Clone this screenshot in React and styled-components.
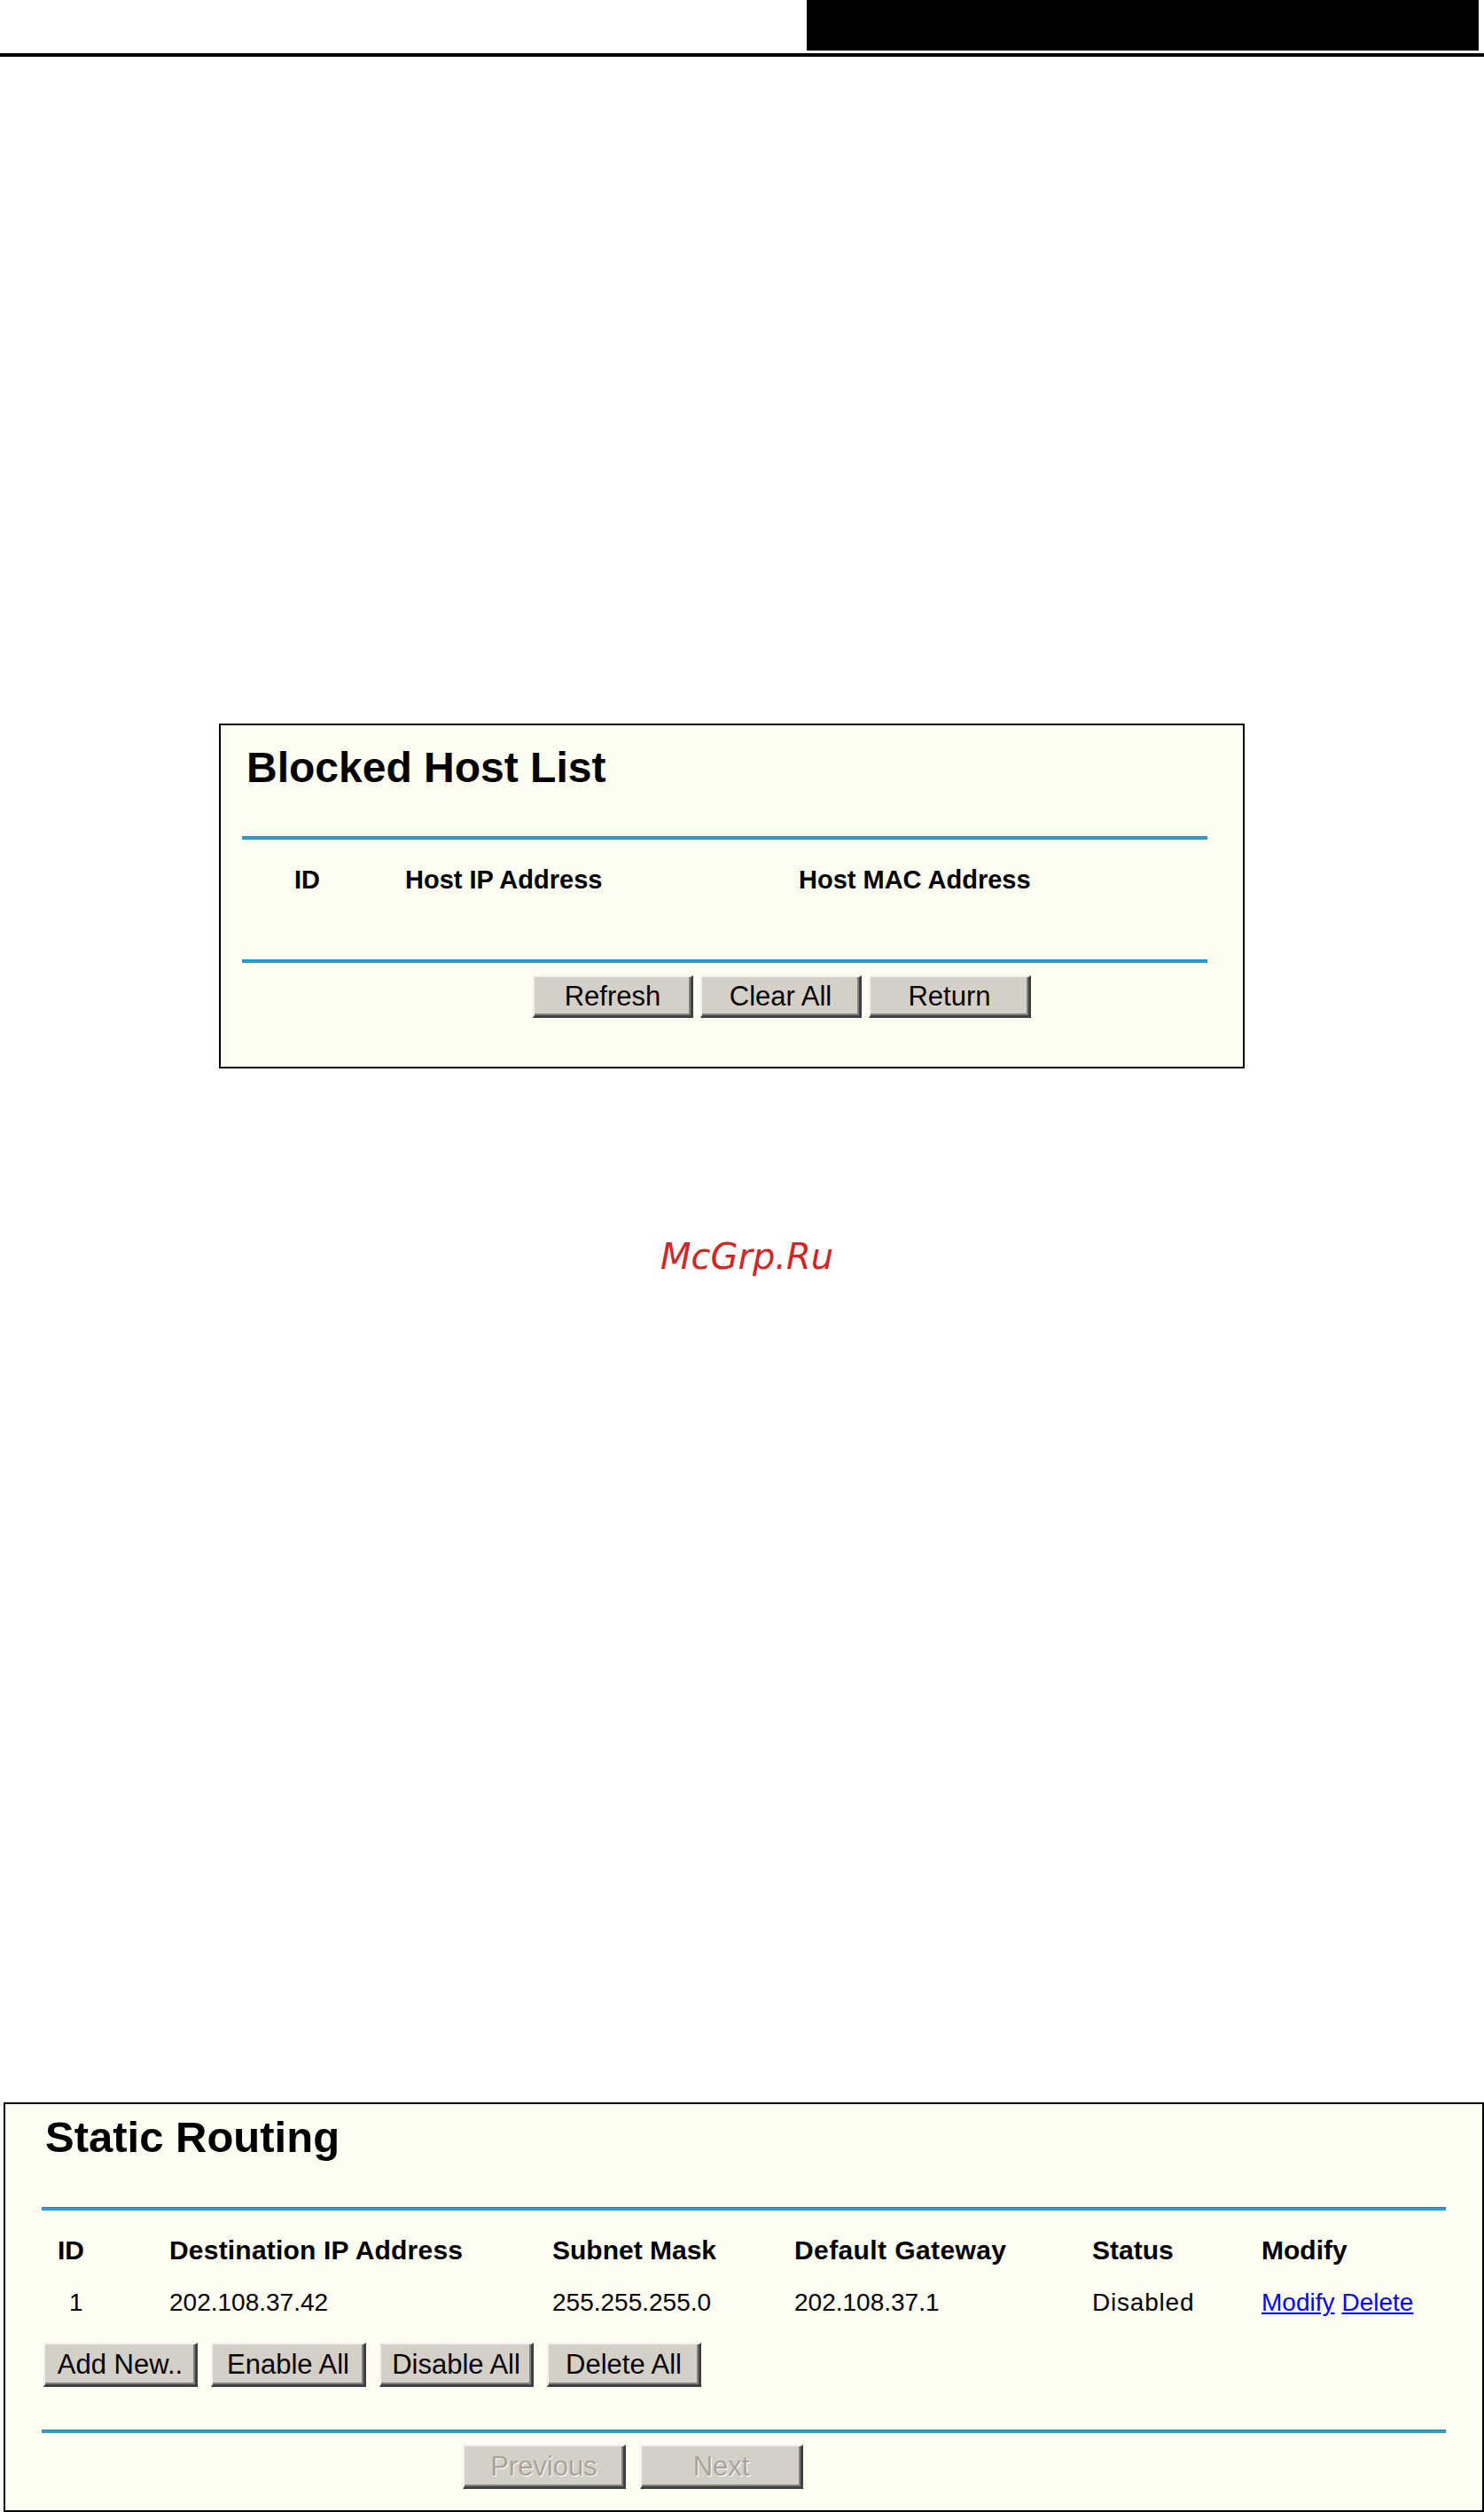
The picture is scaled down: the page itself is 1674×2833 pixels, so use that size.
import React from "react";
import styled, { createGlobalStyle } from "styled-components";

const Global = createGlobalStyle`
  html, body { margin: 0; padding: 0; background: #ffffff; }
  body { font-family: "Liberation Sans", Arial, sans-serif; color: #000; }
  #root { width: 1674px; min-height: 2833px; }
`;

const Page = styled.div`
  width: 1674px;
  height: 2833px;
  display: flex;
  flex-direction: column;
  overflow: hidden;
`;

const TopBar = styled.div`
  display: flex;
  justify-content: flex-end;
  height: 57px;
  padding-right: 6px;
`;

const BlackBox = styled.div`
  width: 758px;
  height: 57px;
  background: #000;
`;

const HeadRule = styled.div`
  margin-top: 3px;
  height: 4px;
  background: #000;
`;

const Panel = styled.div`
  box-sizing: border-box;
  margin-top: ${(p) => p.$top}px;
  margin-left: ${(p) => p.$left}px;
  width: ${(p) => p.$width}px;
  height: ${(p) => p.$height}px;
  border: 2px solid #000;
  background: #fdfdf2;
  padding: ${(p) => p.$pad};
  display: flex;
  flex-direction: column;
`;

const Title = styled.h1`
  margin: 0;
  padding-left: ${(p) => p.$indent}px;
  font-size: ${(p) => p.$size}px;
  line-height: 56px;
  font-weight: 700;
  letter-spacing: 0;
`;

const BlueRule = styled.div`
  margin-top: ${(p) => p.$gap}px;
  height: 4px;
  background: #2a9fd0;
  border-top: 1px solid #1f88b6;
  box-sizing: border-box;
`;

const Row = styled.div`
  margin-top: ${(p) => p.$gap}px;
  display: grid;
  grid-template-columns: ${(p) => p.$cols};
  line-height: 34px;
  font-size: ${(p) => p.$size}px;
  font-weight: ${(p) => (p.$bold ? 700 : 400)};
  white-space: nowrap;
`;

const Cell = styled.div`
  padding-left: ${(p) => p.$indent || 0}px;
  letter-spacing: ${(p) => p.$ls || 0}px;
`;

const Link = styled.a`
  color: #0000ff;
  text-decoration: underline;
  margin-right: 8px;
  cursor: pointer;
`;

const ButtonRow = styled.div`
  margin-top: ${(p) => p.$gap}px;
  padding-left: ${(p) => p.$indent}px;
  display: flex;
  gap: ${(p) => p.$spacing}px;
`;

const Button = styled.button`
  box-sizing: border-box;
  width: ${(p) => p.$w}px;
  height: ${(p) => p.$h}px;
  padding: 0;
  background: #d4d0c8;
  border-style: solid;
  border-width: 2px 3px 3px 2px;
  border-color: #f2f1ec #404040 #404040 #f2f1ec;
  box-shadow: inset -2px -2px 0 #808080;
  font-family: "Liberation Sans", Arial, sans-serif;
  font-size: 31px;
  color: ${(p) => (p.disabled ? "#a7a49c" : "#000")};
  text-shadow: ${(p) => (p.disabled ? "1px 1px 0 #ffffff" : "none")};
  cursor: default;
`;

const Watermark = styled.div`
  margin-top: 188px;
  margin-left: 745px;
  font-family: "DejaVu Sans", Verdana, sans-serif;
  font-style: italic;
  font-size: 40px;
  line-height: 48px;
  color: #d42426;
`;

export default function App() {
  return (
    <Page>
      <Global />
      <TopBar>
        <BlackBox />
      </TopBar>
      <HeadRule />

      <Panel $top={752} $left={247} $width={1157} $height={389} $pad="20px 40px 0 24px">
        <Title $size={48} $indent={5}>Blocked Host List</Title>
        <BlueRule $gap={49} />
        <Row $gap={28} $cols="184px 444px 1fr" $size={29} $bold>
          <Cell $indent={59}>ID</Cell>
          <Cell>Host IP Address</Cell>
          <Cell>Host MAC Address</Cell>
        </Row>
        <BlueRule $gap={73} />
        <ButtonRow $gap={14} $indent={328} $spacing={8}>
          <Button $w={181} $h={48}>Refresh</Button>
          <Button $w={182} $h={48}>Clear All</Button>
          <Button $w={183} $h={48}>Return</Button>
        </ButtonRow>
      </Panel>

      <Watermark>McGrp.Ru</Watermark>

      <Panel $top={930} $left={4} $width={1670} $height={462} $pad="9px 41px 0 41px">
        <Title $size={49} $indent={4}>Static Routing</Title>
        <BlueRule $gap={51} />
        <Row $gap={28} $cols="144px 432px 273px 336px 191px 1fr" $size={30} $bold>
          <Cell $indent={18}>ID</Cell>
          <Cell $ls={0.2}>Destination IP Address</Cell>
          <Cell>Subnet Mask</Cell>
          <Cell $ls={0.4}>Default Gateway</Cell>
          <Cell>Status</Cell>
          <Cell>Modify</Cell>
        </Row>
        <Row $gap={25} $cols="144px 432px 273px 336px 191px 1fr" $size={28}>
          <Cell $indent={31}>1</Cell>
          <Cell>202.108.37.42</Cell>
          <Cell>255.255.255.0</Cell>
          <Cell>202.108.37.1</Cell>
          <Cell $ls={0.8}>Disabled</Cell>
          <Cell>
            <Link>Modify</Link>
            <Link>Delete</Link>
          </Cell>
        </Row>
        <ButtonRow $gap={28} $indent={2} $spacing={15}>
          <Button $w={174} $h={50}>Add New..</Button>
          <Button $w={175} $h={50}>Enable All</Button>
          <Button $w={174} $h={50}>Disable All</Button>
          <Button $w={174} $h={50}>Delete All</Button>
        </ButtonRow>
        <BlueRule $gap={48} />
        <ButtonRow $gap={13} $indent={475} $spacing={16}>
          <Button $w={184} $h={50} disabled>Previous</Button>
          <Button $w={184} $h={50} disabled>Next</Button>
        </ButtonRow>
      </Panel>
    </Page>
  );
}
